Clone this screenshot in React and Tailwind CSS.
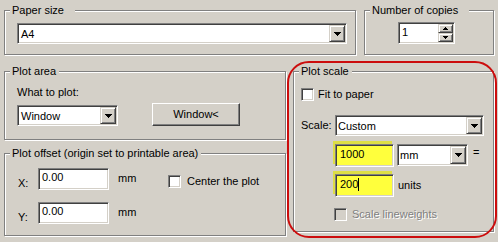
import React from 'react'

const sunken =
  'border border-t-[#808080] border-l-[#808080] border-b-white border-r-white p-[1px] shadow-[inset_1px_1px_0_#404040,inset_-1px_-1px_0_#d4d0c8]'
const raised =
  'bg-[#d4d0c8] border border-t-[#d4d0c8] border-l-[#d4d0c8] border-b-[#404040] border-r-[#404040] shadow-[inset_1px_1px_0_#fff,inset_-1px_-1px_0_#808080]'

const Arrow = () => (
  <svg width="7" height="4" viewBox="0 0 7 4" shapeRendering="crispEdges">
    <path d="M0 0H7V1H6V2H5V3H4V4H3V3H2V2H1V1H0Z" fill="#000" />
  </svg>
)

const SmallArrow = ({ up }) => (
  <svg width="5" height="3" viewBox="0 0 5 3" shapeRendering="crispEdges">
    <path
      d={up ? 'M2 0H3V1H4V2H5V3H0V2H1V1H2Z' : 'M0 0H5V1H4V2H3V3H2V2H1V1H0Z'}
      fill="#000"
    />
  </svg>
)

const Group = ({ title, className = '', labelClass = 'pr-[3px]', children }) => (
  <div
    className={`flex flex-col border border-[#808080] shadow-[inset_1px_1px_0_#fff,1px_1px_0_#fff] ${className}`}
  >
    <span className={`-mt-[7px] ml-[5px] self-start bg-[#d4d0c8] pl-[2px] leading-[13px] ${labelClass}`}>
      {title}
    </span>
    {children}
  </div>
)

const Combo = ({ text, className = '', textClass = 'pl-[1px]' }) => (
  <div className={`flex shrink-0 bg-white ${sunken} ${className}`}>
    <span className={`flex-1 self-center pt-[1px] ${textClass}`}>{text}</span>
    <div className={`flex h-full w-[16px] items-center justify-center ${raised}`}>
      <Arrow />
    </div>
  </div>
)

const Field = ({ value, className = '' }) => (
  <div className={`flex shrink-0 bg-white pl-[3px] pt-[2px] ${sunken} ${className}`}>
    <span>{value}</span>
  </div>
)

const YellowField = ({ value, cursor = false }) => (
  <div className="flex h-[23px] w-[59px] shrink-0 items-start border border-t-[#808080] border-l-[#808080] border-b-white border-r-white bg-[#ffff3c] pl-[4px] pt-[3px] shadow-[inset_1px_1px_0_#404040,inset_-1px_-1px_0_#d4d0c8,-2px_-3px_0_#dede46]">
    <span>{value}</span>
    {cursor && <span className="mt-[0px] h-[13px] w-[1px] bg-black" />}
  </div>
)

const Check = ({ disabled = false }) => (
  <div
    className={`h-[13px] w-[13px] shrink-0 border border-t-[#808080] border-l-[#808080] border-b-white border-r-white shadow-[inset_1px_1px_0_#404040,inset_-1px_-1px_0_#d4d0c8] ${
      disabled ? 'bg-[#d4d0c8]' : 'bg-white'
    }`}
  />
)

export default function App() {
  return (
    <div className="relative h-[242px] w-[498px] overflow-hidden bg-[#d4d0c8] px-[4px] pt-[10px] font-['Liberation_Sans',Arial,sans-serif] text-[11px] leading-[13px] text-black">
      {/* top row */}
      <div className="flex gap-[8px]">
        <Group title="Paper size" className="h-[45px] w-[352px]" labelClass="pr-[11px]">
          <Combo text="A4" className="ml-[12px] mt-[6px] h-[21px] w-[330px]" textClass="pl-[2px]" />
        </Group>
        <Group title="Number of copies" className="h-[45px] w-[130px]" labelClass="pr-[11px]">
          <div className={`ml-[33px] mt-[5px] flex h-[22px] w-[57px] bg-white ${sunken}`}>
            <span className="flex-1 pl-[2px] pt-[2px]">1</span>
            <div className="flex w-[15px] flex-col">
              <div className={`flex h-[9px] items-center justify-center ${raised}`}>
                <SmallArrow up />
              </div>
              <div className={`flex h-[9px] items-center justify-center ${raised}`}>
                <SmallArrow />
              </div>
            </div>
          </div>
        </Group>
      </div>

      {/* bottom area */}
      <div className="mt-[16px] flex gap-[7px]">
        <div className="flex w-[282px] flex-col">
          <Group title="Plot area" className="h-[69px]">
            <span className="ml-[12px] mt-[8px]">What to plot:</span>
            <div className="ml-[12px] mt-[4px] flex items-end">
              <Combo text="Window" className="h-[21px] w-[101px]" textClass="pl-[2px]" />
              <button
                className={`ml-[34px] h-[23px] w-[88px] border border-t-white border-l-white border-b-[#404040] border-r-[#404040] bg-[#d4d0c8] shadow-[inset_-1px_-1px_0_#808080]`}
              >
                Window&lt;
              </button>
            </div>
          </Group>

          <Group title="Plot offset (origin set to printable area)" className="mt-[13px] h-[83px]">
            <div className="ml-[12px] mt-[8px] flex items-start">
              <span className="mt-[9px] w-[21px] pl-[1px]">X:</span>
              <Field value="0.00" className="h-[22px] w-[71px]" />
              <span className="ml-[9px] mt-[4px] w-[50px]">mm</span>
              <div className="mt-[7px] flex items-center">
                <Check />
                <span className="ml-[6px]">Center the plot</span>
              </div>
            </div>
            <div className="ml-[12px] mt-[12px] flex items-start">
              <span className="mt-[9px] w-[21px] pl-[1px]">Y:</span>
              <Field value="0.00" className="h-[22px] w-[71px]" />
              <span className="ml-[9px] mt-[4px] w-[50px]">mm</span>
            </div>
          </Group>
        </div>

        <Group title="Plot scale" className="h-[161px] w-[201px]">
          <div className="ml-[7px] mt-[10px] flex items-center">
            <Check />
            <span className="ml-[4px]">Fit to paper</span>
          </div>
          <div className="ml-[7px] mt-[14px] flex items-center">
            <span className="w-[34px]">Scale:</span>
            <Combo text="Custom" className="h-[21px] w-[149px]" textClass="pl-[1px]" />
          </div>
          <div className="ml-[41px] mt-[8px] flex items-start">
            <YellowField value="1000" />
            <Combo text="mm" className="ml-[3px] h-[22px] w-[71px]" textClass="pl-[1px]" />
            <span className="ml-[5px] mt-[2px]">=</span>
          </div>
          <div className="ml-[41px] mt-[7px] flex items-center">
            <YellowField value="200" cursor />
            <span className="ml-[4px]">units</span>
          </div>
          <div className="ml-[40px] mt-[11px] flex items-center">
            <Check disabled />
            <span className="ml-[5px] text-[#808080] [text-shadow:1px_1px_0_#fff]">Scale lineweights</span>
          </div>
        </Group>
      </div>

      {/* red annotation ring */}
      <div className="pointer-events-none absolute left-[287px] top-[61px] h-[177px] w-[210px] rounded-[22px] border-2 border-[#cc0d0d]" />
    </div>
  )
}
